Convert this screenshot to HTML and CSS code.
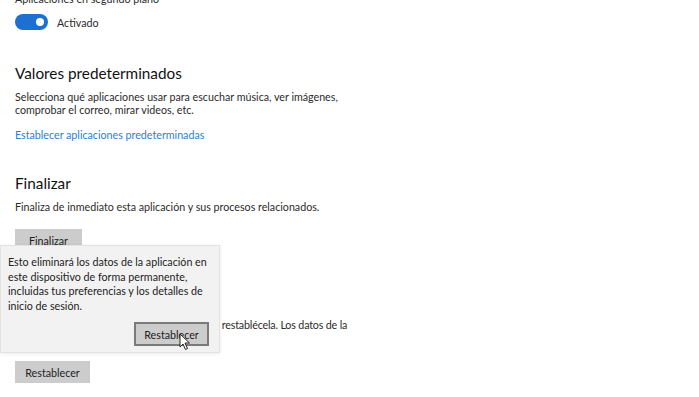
FILE: index.html
```html
<!DOCTYPE html>
<html lang="es">
<head>
    <meta charset="UTF-8">
    <meta name="viewport" content="width=device-width, initial-scale=1.0">
    <title>Opciones avanzadas</title>
    <link rel="stylesheet" href="styles.css">
</head>
<body>
    <div class="page">
        <div class="bg-label">Aplicaciones en segundo plano</div>
        <div class="toggle-row">
            <span class="toggle"><span class="knob"></span></span>
            <span>Activado</span>
        </div>

        <h2 class="title">Valores predeterminados</h2>
        <p class="text">Selecciona qué aplicaciones usar para escuchar música, ver imágenes,<br>comprobar el correo, mirar videos, etc.</p>
        <a href="#" class="link">Establecer aplicaciones predeterminadas</a>

        <h2 class="title title-end">Finalizar</h2>
        <p class="text">Finaliza de inmediato esta aplicación y sus procesos relacionados.</p>
        <button class="btn">Finalizar</button>

        <h2 class="title title-reset">Restablecer</h2>
        <p class="text text-tight">Si esta aplicación no funciona correctamente, restablécela. Los datos de la<br>aplicación se eliminarán.</p>
        <button class="btn btn-reset">Restablecer</button>
    </div>

    <!-- Ventana de confirmación -->
    <div class="flyout">
        <p class="flyout-text">Esto eliminará los datos de la aplicación en<br>este dispositivo de forma permanente,<br>incluidas tus preferencias y los detalles de<br>inicio de sesión.</p>
        <div class="flyout-actions">
            <button class="btn-confirm">Restablecer</button>
        </div>
    </div>

    <svg class="cursor" width="12" height="18" viewBox="0 0 12 18">
        <path d="M1 1 L1 14 L4 11 L6.5 16.5 L8.5 15.5 L6 10 L10.5 10 Z" fill="#fff" stroke="#222" stroke-width="1" stroke-linejoin="round"/>
    </svg>
</body>
</html>
```

FILE: styles.css
```css
body {
    margin: 0;
    padding: 0;
    background: #fff;
    font-family: "Lato", "Open Sans", sans-serif;
    color: #2b2b2b;
    font-size: 10.7px;
    overflow: hidden;
    height: 397px;
}

.page {
    display: flex;
    flex-direction: column;
    align-items: flex-start;
    padding: 0 15px;
}

.bg-label {
    margin-top: -8px;
    line-height: 14px;
}

.toggle-row {
    display: flex;
    align-items: center;
    gap: 9px;
    margin-top: 8px;
    height: 16px;
}

.toggle {
    width: 33px;
    height: 16px;
    border-radius: 8px;
    background: #1f6fd1;
    display: flex;
    align-items: center;
    justify-content: flex-end;
    padding-right: 4px;
    box-sizing: border-box;
}

.knob {
    width: 8px;
    height: 8px;
    border-radius: 50%;
    background: #fff;
}

.title {
    margin: 33px 0 0;
    font-size: 15.3px;
    font-weight: 400;
    line-height: 20px;
    color: #111;
}

.text {
    margin: 7px 0 0;
    line-height: 13px;
}

.text-tight {
    letter-spacing: -0.16px;
}

.link {
    margin-top: 12px;
    line-height: 13px;
    color: #2a7fd4;
    text-decoration: none;
}

.title-end {
    margin-top: 32px;
}

.title-reset {
    margin-top: 40px;
}

.btn {
    margin-top: 16px;
    width: 67px;
    height: 22px;
    padding: 0;
    border: none;
    background: #cccccc;
    color: #222;
    font-family: inherit;
    font-size: 10.7px;
}

.btn-reset {
    margin-top: 17px;
    width: 75px;
}

.flyout {
    position: absolute;
    left: 0;
    top: 245px;
    width: 220px;
    height: 108px;
    box-sizing: border-box;
    background: #f2f2f2;
    border: 1px solid #e2e2e2;
    box-shadow: 0 1px 4px rgba(0, 0, 0, 0.08);
    padding: 9px 10px 0 7px;
}

.flyout-text {
    margin: 0;
    line-height: 14.5px;
    white-space: nowrap;
    color: #222;
}

.flyout-actions {
    display: flex;
    justify-content: flex-end;
    margin-top: 9px;
}

.btn-confirm {
    width: 75px;
    height: 24px;
    border: 2px solid #7a7a7a;
    background: #cccccc;
    color: #222;
    font-family: inherit;
    font-size: 10.7px;
    padding: 0;
}

.cursor {
    position: absolute;
    left: 179px;
    top: 333px;
}
```
